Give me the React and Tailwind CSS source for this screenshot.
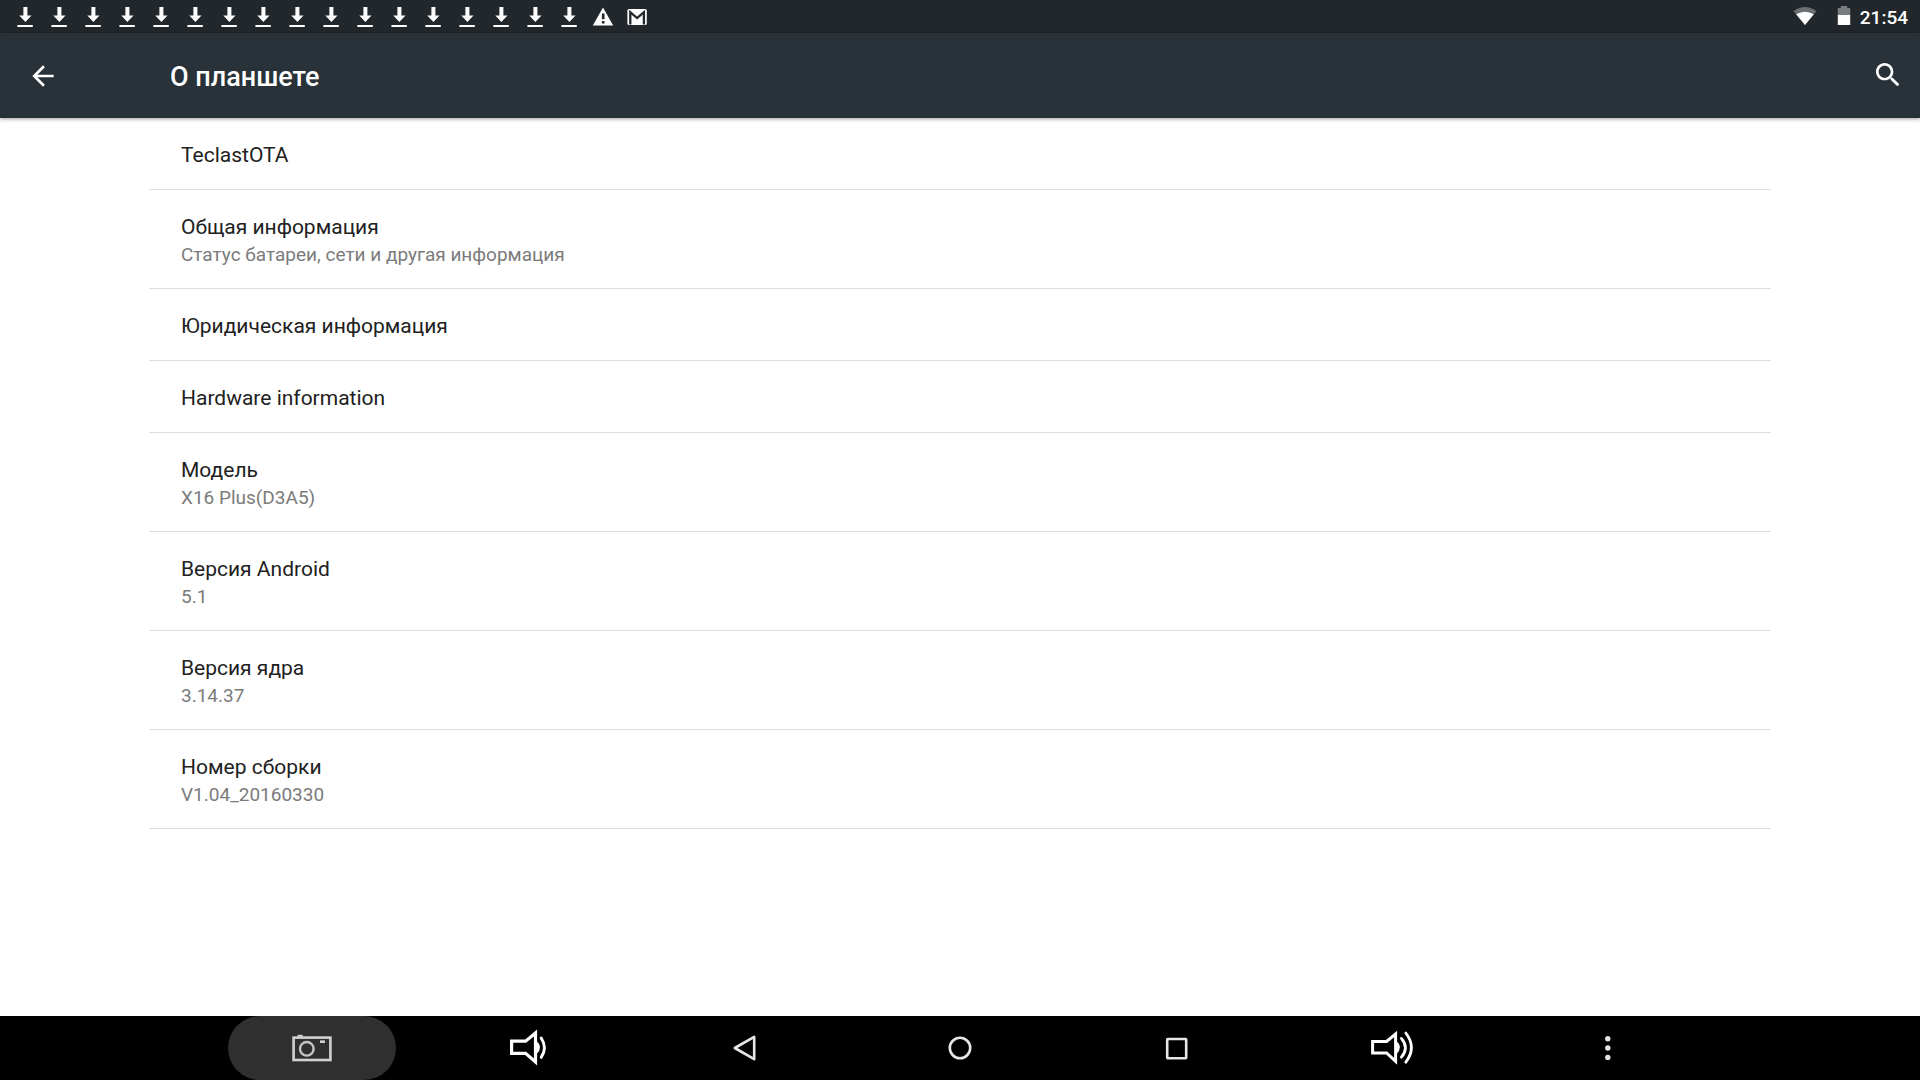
import React from "react";

const ITEMS = [
  { title: "TeclastOTA" },
  { title: "Общая информация", summary: "Статус батареи, сети и другая информация" },
  { title: "Юридическая информация" },
  { title: "Hardware information" },
  { title: "Модель", summary: "X16 Plus(D3A5)" },
  { title: "Версия Android", summary: "5.1" },
  { title: "Версия ядра", summary: "3.14.37" },
  { title: "Номер сборки", summary: "V1.04_20160330" },
];

const DOWNLOADS = Array.from({ length: 17 }, (_, i) => i);

function StatusIcon({ children }) {
  return (
    <svg viewBox="0 0 34 33" className="h-[33px] w-[34px] shrink-0" fill="#fdfdfd" aria-hidden="true">
      {children}
    </svg>
  );
}

function StatusBar() {
  return (
    <div className="flex h-[33px] shrink-0 items-center justify-between bg-[#22272b] pr-3 pl-2">
      <div className="flex">
        {DOWNLOADS.map((i) => (
          <StatusIcon key={i}>
            <path d="M15.4 7h4v8.6h4.1L17.4 22l-6.1-6.4h4.1z" />
            <path d="M9.4 25h15.4v2H9.4z" />
          </StatusIcon>
        ))}
        <StatusIcon>
          <path
            fillRule="evenodd"
            d="M17 7.5L27.2 25.6H6.8zM15.9 13.6v5.6h2.6v-5.6zM15.9 20.9v2.6h2.6v-2.6z"
          />
        </StatusIcon>
        <StatusIcon>
          <rect x="7.4" y="9" width="19.4" height="16" rx="1.6" />
          <path d="M10.3 24.4V12.2L17.1 18l6.8-5.8v12.2" fill="none" stroke="#22272b" strokeWidth="2.3" />
        </StatusIcon>
      </div>
      <div className="flex items-center">
        <svg viewBox="0 0 24 33" className="h-[33px] w-6" aria-hidden="true">
          <path d="M.6 11.2Q12 2.8 23.4 11.2L12 25z" fill="#6b6f72" />
          <path d="M3.2 14.2Q12 9.2 20.8 14.2L12 25z" fill="#fff" />
        </svg>
        <svg viewBox="0 0 14 33" className="ml-5 h-[33px] w-3.5" aria-hidden="true">
          <path d="M.8 8h3V6h6.4v2h3v8H.8z" fill="#7a7d80" />
          <path d="M.8 15h12.4v10H.8z" fill="#fff" />
        </svg>
        <time className="ml-[9px] pt-0.5 text-[19px] leading-6 font-medium text-white">21:54</time>
      </div>
    </div>
  );
}

function Header() {
  return (
    <header className="z-10 flex h-[85px] shrink-0 items-center bg-[#283238] pr-4 pl-[27px] text-white shadow-[0_1px_4px_rgba(30,0,10,0.4)]">
      <button type="button" aria-label="Назад" className="mr-[111px]">
        <svg viewBox="0 0 24 24" className="size-8" fill="currentColor">
          <path d="M20 11H7.83l5.59-5.59L12 4l-8 8 8 8 1.41-1.41L7.83 13H20v-2z" />
        </svg>
      </button>
      <h1 className="flex-1 pt-0.5 text-[27px] leading-8 font-medium">О планшете</h1>
      <button type="button" aria-label="Поиск" className="pb-0.5">
        <svg viewBox="0 0 24 24" className="size-8" fill="currentColor">
          <path d="M15.5 14h-.79l-.28-.27C15.41 12.59 16 11.11 16 9.5 16 5.91 13.09 3 9.5 3S3 5.91 3 9.5 5.91 16 9.5 16c1.61 0 3.09-.59 4.23-1.57l.27.28v.79l5 4.99L20.49 19l-4.99-5zm-6 0C7.01 14 5 11.99 5 9.5S7.01 5 9.5 5 14 7.01 14 9.5 11.99 14 9.5 14z" />
        </svg>
      </button>
    </header>
  );
}

function NavButton({ label, active, children }) {
  return (
    <div className="flex-1 px-6">
      <button
        type="button"
        aria-label={label}
        className={`flex w-full justify-center rounded-full ${active ? "bg-[#2f2f2f]" : ""}`}
      >
        <svg viewBox="0 0 64 64" className="size-16" fill="none" stroke="#e6e6e6" strokeWidth="2.6">
          {children}
        </svg>
      </button>
    </div>
  );
}

function NavBar() {
  return (
    <nav className="flex h-16 shrink-0 bg-black px-[204px]">
      <NavButton label="Снимок экрана" active>
        <rect x="13.6" y="21.6" width="36.8" height="22.4" stroke="#d2d2d2" />
        <path d="M17.6 19.8h5.2" stroke="#d2d2d2" strokeWidth="2" />
        <circle cx="26.8" cy="32.8" r="6.8" stroke="#c4c4c4" strokeWidth="2.4" />
        <path d="M40 25.7h5" stroke="#d2d2d2" strokeWidth="2.6" />
      </NavButton>
      <NavButton label="Тише">
        <g stroke="#fff">
          <path d="M15.6 25.2h14L39.5 17v29L29.6 37.4h-14z" strokeWidth="3.2" />
          <path d="M40.5 25q7.4 6.4 0 13z" fill="#fff" stroke="none" />
          <path d="M45.2 22q6.4 9.6 0 19.4" strokeWidth="2.9" strokeLinecap="round" />
        </g>
      </NavButton>
      <NavButton label="Назад">
        <path d="M22.8 32l19.4-11.2v22.4z" strokeLinejoin="round" />
      </NavButton>
      <NavButton label="Домой">
        <circle cx="32" cy="32" r="10.2" />
      </NavButton>
      <NavButton label="Недавние приложения">
        <rect x="23.2" y="23" width="19" height="19.2" rx="0.6" strokeLinejoin="round" />
      </NavButton>
      <NavButton label="Громче">
        <g stroke="#fff">
          <path d="M12.6 25.4h14L35.6 18v27.4L26.6 37h-14z" strokeWidth="3" />
          <path d="M36.5 25q7 6.2 0 13z" fill="#fff" stroke="none" />
          <path d="M41.4 22.4q8 9.4 0 18.8M45.8 17q11.2 14.6 0 29.2" strokeWidth="2.8" strokeLinecap="round" />
        </g>
      </NavButton>
      <NavButton label="Меню">
        <g fill="#e6e6e6" stroke="none">
          <circle cx="31.8" cy="22.7" r="2.7" />
          <circle cx="31.8" cy="32" r="2.7" />
          <circle cx="31.8" cy="41.4" r="2.7" />
        </g>
      </NavButton>
    </nav>
  );
}

export default function App() {
  return (
    <div className="flex min-h-screen flex-col bg-white font-[Roboto,sans-serif]">
      <StatusBar />
      <Header />
      <main className="flex-1 px-[149px]">
        <ul>
          {ITEMS.map((item) => (
            <li key={item.title} className="border-b border-[#dedede]">
              <button type="button" className="block w-full px-8 pt-[23px] pb-5 text-left">
                <span className="block text-[21px] leading-7 text-[#212121]">{item.title}</span>
                {item.summary && (
                  <span className="block text-[19px] leading-[27px] text-[#7b7b7b]">{item.summary}</span>
                )}
              </button>
            </li>
          ))}
        </ul>
      </main>
      <NavBar />
    </div>
  );
}
